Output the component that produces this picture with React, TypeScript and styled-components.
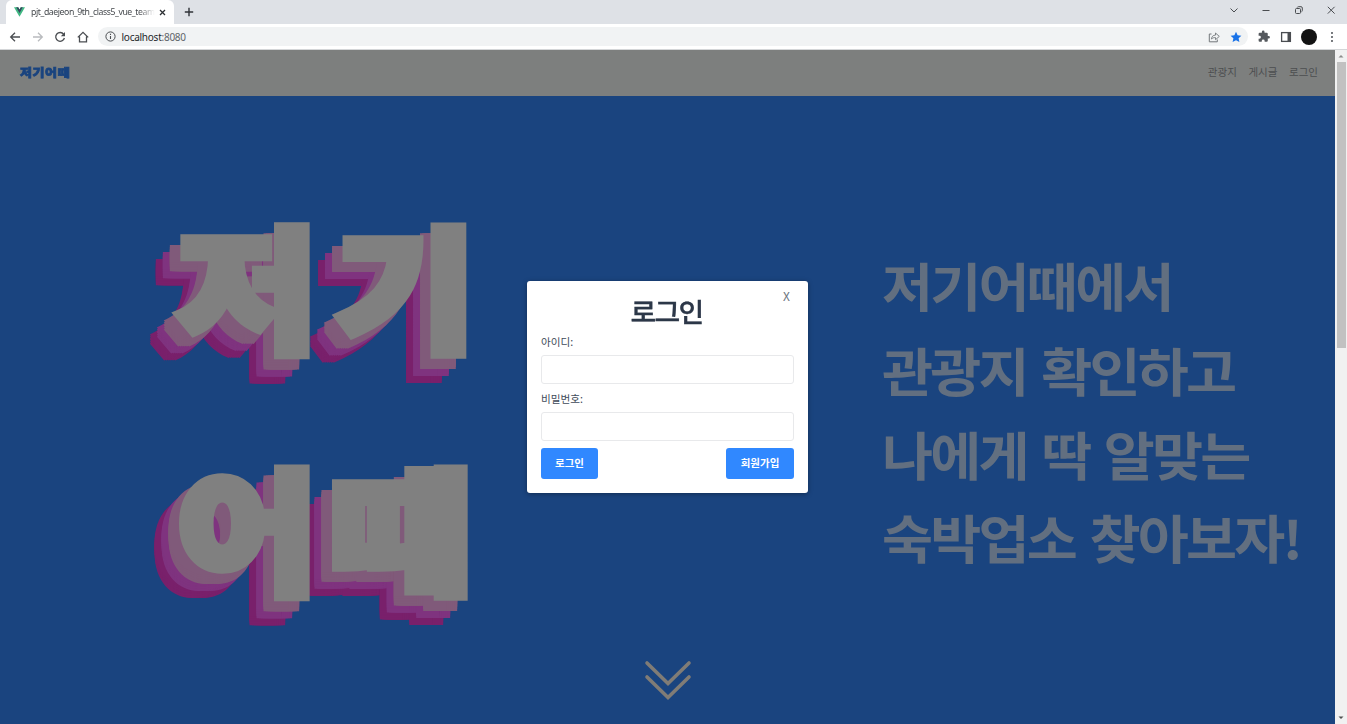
import React from 'react';
import styled, { createGlobalStyle } from 'styled-components';

const GlobalStyle = createGlobalStyle`
  * { box-sizing: border-box; }
  body {
    margin: 0;
    overflow: hidden;
    font-family: 'Noto Sans CJK KR', sans-serif;
  }
`;

const Window = styled.div`
  width: 1347px;
  height: 724px;
  display: flex;
  flex-direction: column;
  overflow: hidden;
`;

/* ---------- browser chrome ---------- */

const TabStrip = styled.div`
  height: 24px;
  flex: none;
  background: #dee1e6;
  display: flex;
  align-items: flex-end;
  padding-left: 6px;
`;

const Tab = styled.div`
  width: 168px;
  height: 24px;
  background: #fff;
  border-radius: 6px 6px 0 0;
  display: flex;
  align-items: center;
  padding: 0 6px 0 8px;
`;

const TabTitle = styled.span`
  width: 124px;
  flex: none;
  margin-left: 6px;
  white-space: nowrap;
  font: 8.7px/14px 'Noto Sans', sans-serif;
  letter-spacing: -0.42px;
  color: #45494d;
  mask-image: linear-gradient(to right, #000 108px, transparent 124px);
`;

const TabClose = styled.svg`
  margin-left: 3px;
  flex: none;
`;

const NewTab = styled.svg`
  align-self: center;
  margin-left: 10px;
`;

const WindowControls = styled.div`
  margin-left: auto;
  align-self: flex-start;
  height: 20px;
  display: flex;
  align-items: center;
  gap: 20.3px;
  padding-right: 10px;
`;

const Toolbar = styled.div`
  height: 26px;
  flex: none;
  background: #fff;
  border-bottom: 1px solid #d4d6d8;
  display: flex;
  align-items: center;
  padding: 0 8px 0 8px;
`;

const NavIcons = styled.div`
  display: flex;
  gap: 8.5px;
  align-items: center;
`;

const AddressBar = styled.div`
  flex: 1;
  height: 19px;
  margin-left: 8px;
  border-radius: 10px;
  background: #f1f3f4;
  display: flex;
  align-items: center;
  padding: 0 6px 0 7px;
`;

const Url = styled.span`
  margin-left: 6px;
  font: 10px/18px 'Noto Sans', sans-serif;
  letter-spacing: -0.25px;
  color: #24272b;
  span { color: #5f6368; }
`;

const AddressActions = styled.div`
  margin-left: auto;
  display: flex;
  gap: 10px;
  align-items: center;
`;

const Extensions = styled.div`
  display: flex;
  align-items: center;
  gap: 8px;
  margin-left: 9px;
`;

const Avatar = styled.span`
  width: 16px;
  height: 16px;
  border-radius: 50%;
  background: #131313;
`;

/* ---------- page ---------- */

const Viewport = styled.div`
  flex: 1;
  display: flex;
  min-height: 0;
`;

const Page = styled.main`
  position: relative;
  flex: 1;
  display: flex;
  flex-direction: column;
  overflow: hidden;
  background: #1a447f;
`;

const Header = styled.header`
  height: 46px;
  flex: none;
  display: flex;
  align-items: center;
  justify-content: space-between;
  padding: 0 17px 1px 20px;
  background: #7d7f7e;
`;

const Brand = styled.span`
  display: block;
  font-size: 13px;
  line-height: 16px;
  font-weight: 900;
  letter-spacing: 0.6px;
  color: #1a447f;
  -webkit-text-stroke: 0.9px #1a447f;
  transform: scaleY(0.86);
`;

const Menu = styled.nav`
  display: flex;
  gap: 11.6px;
  margin-top: -1px;
  font-size: 10.5px;
  line-height: 16px;
  color: #4c4e50;
`;

const Hero = styled.section`
  flex: 1;
  display: grid;
  grid-template-columns: 882px 1fr;
  grid-template-rows: 564px 1fr;
`;

/* Each layer is spread by half the outline width, so it is as heavy as the outlined face. */
const SPREAD = 5.5;
const STEPS = [-1, -0.6, -0.2, 0.2, 0.6, 1];
const OFFSETS = STEPS.flatMap((dx) => STEPS.map((dy) => [dx, dy])).filter(
  ([dx, dy]) => Math.abs(dx) === 1 || Math.abs(dy) === 1,
);
const LAYERS = [
  { x: -10.5, y: 12, color: '#805a7a' },
  { x: -17.5, y: 20, color: '#7f337f' },
  { x: -24.5, y: 28, color: '#79206b' },
];
const layeredShadow = LAYERS.flatMap(({ x, y, color }) =>
  OFFSETS.map(([dx, dy]) => `${x + dx * SPREAD}px ${y + dy * SPREAD}px 0 ${color}`),
).join(', ');

const Lettering = styled.h1`
  margin: 0;
  padding: 66px 0 0 177px;
  font-size: 153px;
  line-height: 242px;
  font-weight: 900;
  color: #808080;
  -webkit-text-stroke: 11px #808080;
  text-shadow: ${layeredShadow};
  white-space: nowrap;
`;

const LetteringLine = styled.span<{ $spacing: number }>`
  display: block;
  height: 242px;
  letter-spacing: ${(p) => p.$spacing}px;
  transform: scaleY(0.878);
`;

const Slogan = styled.p`
  margin: 0;
  padding-top: 158px;
  font-size: 55.5px;
  line-height: 89.8px;
  font-weight: 700;
  letter-spacing: -0.05em;
  word-spacing: 4.5px;
  color: #626f80;
  white-space: nowrap;
  transform: scaleY(0.9354);
  transform-origin: top;
`;

const ScrollHint = styled.div`
  grid-column: 1 / -1;
  display: flex;
  justify-content: center;
`;

const Overlay = styled.div`
  position: absolute;
  inset: 0;
  display: flex;
  justify-content: center;
  align-items: center;
`;

const Dialog = styled.form`
  position: relative;
  width: 281px;
  height: 212px;
  padding: 14px;
  display: flex;
  flex-direction: column;
  background: #fff;
  border-radius: 3px;
  box-shadow: 0 1px 5px rgba(0, 0, 0, 0.35);
`;

const DialogClose = styled.span`
  position: absolute;
  top: 6px;
  right: 18px;
  font-size: 12px;
  line-height: 17px;
  color: #6d747e;
`;

const DialogTitle = styled.h2`
  margin: 0;
  height: 38px;
  padding-right: 2px;
  font-size: 28px;
  line-height: 32px;
  font-weight: 500;
  letter-spacing: -0.065em;
  text-align: center;
  color: #2c3748;
  -webkit-text-stroke: 0.3px #2c3748;
  transform: scaleY(0.94);
  transform-origin: 50% 16px;
`;

const Label = styled.label`
  height: 21px;
  font-size: 10.6px;
  line-height: 17px;
  color: #404a59;
`;

const Input = styled.input`
  height: 29px;
  margin: 1px 0 6px;
  border: 1px solid #e8e9eb;
  border-radius: 3px;
  background: #fff;
`;

const Actions = styled.div`
  display: flex;
  justify-content: space-between;
  margin-top: 1px;
`;

const Button = styled.button<{ $width: number }>`
  width: ${(p) => p.$width}px;
  height: 31px;
  padding: 0 0 1px;
  border: 0;
  border-radius: 3px;
  background: #3088ff;
  color: #fff;
  font: 700 10.5px/28px 'Noto Sans CJK KR', sans-serif;
`;

const Scrollbar = styled.aside`
  width: 12px;
  flex: none;
  background: #f1f1f1;
  display: flex;
  flex-direction: column;
  align-items: center;
  justify-content: space-between;
`;

const Thumb = styled.div`
  width: 9px;
  height: 286px;
  background: #c1c1c1;
  margin-bottom: auto;
`;

const ArrowBox = styled.svg`
  width: 12px;
  height: 12px;
  flex: none;
`;

const stroke = { fill: 'none', stroke: '#4a4d51', strokeWidth: 1.3 };

export default function App() {
  return (
    <Window>
      <GlobalStyle />
      <TabStrip>
        <Tab>
          <svg width="11" height="10" viewBox="0 0 11 10">
            <path d="M0 0.3h4.2L5.5 2.5 6.8.3H11L5.5 9.7z" fill="#41b883" />
            <path d="M2.2 0.3h2L5.5 2.5 6.8.3h2L5.5 6z" fill="#35495e" />
          </svg>
          <TabTitle>pjt_daejeon_9th_class5_vue_team</TabTitle>
          <TabClose width="9" height="9" viewBox="0 0 9 9">
            <path d="M2 2l5 5M7 2L2 7" {...stroke} stroke="#2c2f33" />
          </TabClose>
        </Tab>
        <NewTab width="10" height="10" viewBox="0 0 10 10">
          <path d="M5 .8v8.4M.8 5h8.4" {...stroke} stroke="#303338" strokeWidth={1.4} />
        </NewTab>
        <WindowControls>
          <svg width="12" height="12" viewBox="0 0 12 12">
            <path d="M2.5 4.5L6 8l3.500-3.500" {...stroke} strokeWidth={1} />
          </svg>
          <svg width="12" height="12" viewBox="0 0 12 12">
            <path d="M2.500 6.500h7" {...stroke} strokeWidth={1} />
          </svg>
          <svg width="12" height="12" viewBox="0 0 12 12">
            <rect x="2.500" y="4.500" width="5" height="5" rx="1" {...stroke} strokeWidth={1} />
            <path d="M4.200 3.500Q4.500 2.700 5.500 2.700H8Q9.300 2.700 9.300 4V6.500Q9.300 7.500 8.500 7.800" {...stroke} strokeWidth={1} />
          </svg>
          <svg width="12" height="12" viewBox="0 0 12 12">
            <path d="M2.800 2.800l6.800 6.800M9.600 2.800L2.800 9.600" {...stroke} strokeWidth={1} />
          </svg>
        </WindowControls>
      </TabStrip>

      <Toolbar>
        <NavIcons>
          <svg width="14" height="14" viewBox="0 0 14 14">
            <path d="M12 7H3M7 2.700L2.700 7 7 11.300" {...stroke} />
          </svg>
          <svg width="14" height="14" viewBox="0 0 14 14">
            <path d="M2 7h9M7 2.700L11.300 7 7 11.300" {...stroke} stroke="#b9bbbe" />
          </svg>
          <svg width="14" height="14" viewBox="0 0 14 14">
            <path d="M10.700 4.300A4.400 4.400 0 1 0 11.400 8" {...stroke} />
            <path d="M12 2v4.200H7.800z" fill="#4a4d51" />
          </svg>
          <svg width="14" height="14" viewBox="0 0 14 14">
            <path d="M1.800 7.400L7 2.300l5.200 5.100M3.500 6.500v5.300h7V6.500" {...stroke} />
          </svg>
        </NavIcons>
        <AddressBar>
          <svg width="11" height="11" viewBox="0 0 11 11">
            <circle cx="5.500" cy="5.500" r="4.600" {...stroke} strokeWidth={1} />
            <path d="M5.500 5v3M5.500 2.800v1.200" {...stroke} strokeWidth={1.100} />
          </svg>
          <Url>localhost<span>:8080</span></Url>
          <AddressActions>
            <svg width="12" height="12" viewBox="0 0 12 12">
              <path d="M3.500 3H1.300v7.800h8V8.500" {...stroke} stroke="#73777b" strokeWidth={1} />
              <path d="M3.500 8C3.700 5.500 5 4.200 7.500 4.100V2l3.800 3.400-3.800 3.300V6.600C5.700 6.500 4.500 7 3.500 8z" {...stroke} stroke="#73777b" strokeWidth={0.900} />
            </svg>
            <svg width="12" height="12" viewBox="0 0 12 12">
              <path d="M6 .8l1.600 3.500 3.800.4-2.800 2.600.8 3.800L6 9.200l-3.400 1.900.8-3.800L.6 4.700l3.800-.4z" fill="#1a73e8" />
            </svg>
          </AddressActions>
        </AddressBar>
        <Extensions>
          <svg width="14" height="14" viewBox="-1 0 26 26">
            <path
              d="M20.500 11H19V7a2 2 0 0 0-2-2h-4V3.500a2.500 2.500 0 0 0-5 0V5H4a2 2 0 0 0-2 2v3.800h1.500a2.700 2.700 0 0 1 0 5.400H2V20a2 2 0 0 0 2 2h3.800v-1.500a2.700 2.700 0 0 1 5.400 0V22H17a2 2 0 0 0 2-2v-4h1.500a2.500 2.500 0 0 0 0-5z"
              fill="#55595e"
            />
          </svg>
          <svg width="14" height="14" viewBox="0 0 14 14">
            <rect x="2.600" y="2.600" width="8.800" height="8.800" {...stroke} />
            <path d="M8.500 2.500h3v9h-3z" fill="#4a4d51" />
          </svg>
          <Avatar />
          <svg width="14" height="14" viewBox="0 0 14 14" fill="#55595e">
            <circle cx="7" cy="3" r="1.050" />
            <circle cx="7" cy="7" r="1.050" />
            <circle cx="7" cy="11" r="1.050" />
          </svg>
        </Extensions>
      </Toolbar>

      <Viewport>
        <Page>
          <Header>
            <Brand>저기어때</Brand>
            <Menu>
              <span>관광지</span>
              <span>게시글</span>
              <span>로그인</span>
            </Menu>
          </Header>
          <Hero>
            <Lettering>
              <LetteringLine $spacing={17}>저기</LetteringLine>
              <LetteringLine $spacing={13}>어때</LetteringLine>
            </Lettering>
            <Slogan>
              저기어때에서
              <br />
              관광지 확인하고
              <br />
              나에게 딱 알맞는
              <br />
              숙박업소 찾아보자!
            </Slogan>
            <ScrollHint>
              <svg width="48" height="42" viewBox="0 0 48 42">
                <path
                  d="M3 3l21 20.500L45 3M3 17l21 20.500L45 17"
                  fill="none"
                  stroke="#807c76"
                  strokeWidth="3.600"
                  strokeLinecap="round"
                />
              </svg>
            </ScrollHint>
          </Hero>
          <Overlay>
            <Dialog>
              <DialogClose>X</DialogClose>
              <DialogTitle>로그인</DialogTitle>
              <Label htmlFor="user-id">아이디:</Label>
              <Input id="user-id" />
              <Label htmlFor="user-pw">비밀번호:</Label>
              <Input id="user-pw" type="password" />
              <Actions>
                <Button type="button" $width={57}>로그인</Button>
                <Button type="button" $width={68}>회원가입</Button>
              </Actions>
            </Dialog>
          </Overlay>
        </Page>
        <Scrollbar>
          <ArrowBox viewBox="0 0 12 12">
            <path d="M3.500 7.500L6 5l2.500 2.500z" fill="#8c8c8c" />
          </ArrowBox>
          <Thumb />
          <ArrowBox viewBox="0 0 12 12">
            <path d="M3.500 4.500L6 7l2.500-2.500z" fill="#505050" />
          </ArrowBox>
        </Scrollbar>
      </Viewport>
    </Window>
  );
}
